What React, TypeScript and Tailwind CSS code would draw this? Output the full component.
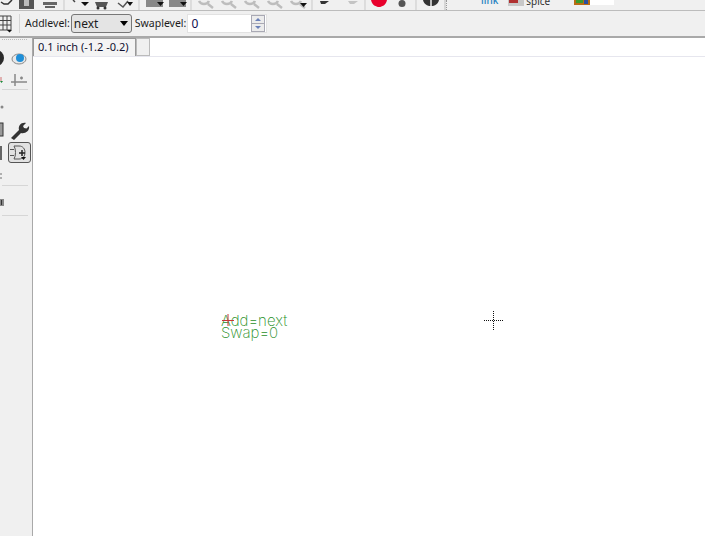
const ui = { fontFamily: '"Noto Sans", sans-serif' };

function TopIcons() {
  return (
    <svg width="446" height="10" viewBox="0 0 446 10" className="shrink-0">
      {/* open / save / print, only their bottoms are in view */}
      <path d="M1 2 4 4H8L12 0" fill="none" stroke="#333" strokeWidth="1.5" />
      <path d="M19 0H34V9H19Z" fill="#555" />
      <rect x="24" y="0" width="5" height="6" fill="#bbb" />
      <path d="M43 2H57V5H43Z" fill="#666" />
      <path d="M45 7H55" stroke="#333" strokeWidth="1.5" />
      <path d="M64 0V10" stroke="#c9c9c9" />
      {/* arrows */}
      <path d="M73 0 75 2" stroke="#444" strokeWidth="1.5" />
      <path d="M81 2H89L85 6Z" fill="#111" />
      <path d="M95 2H108L106 7H97Z" fill="#555" />
      <circle cx="98" cy="8" r="1.5" fill="#333" />
      <circle cx="105" cy="8" r="1.5" fill="#333" />
      <path d="M118 3 123 7 128 1" fill="none" stroke="#555" strokeWidth="1.5" />
      <path d="M127 2H133L130 6Z" fill="#111" />
      <path d="M139 0V10" stroke="#c9c9c9" />
      {/* two grey buttons */}
      <rect x="146" y="0" width="17" height="7" fill="#888" />
      <path d="M157 2H164L160.500 6Z" fill="#111" />
      <rect x="169" y="0" width="17" height="7" fill="#888" />
      <path d="M180 2H187L183.500 6Z" fill="#111" />
      <path d="M191 0V10" stroke="#c9c9c9" />
      {/* zoom glasses, greyed out */}
      <g fill="none" stroke="#bdbdbd" strokeWidth="2.500">
        <path d="M199 1C201 5 207 5 209 1M208 4 213 8" />
        <path d="M222 1C224 5 230 5 232 1M231 4 236 8" />
        <path d="M245 1C247 5 253 5 255 1M254 4 259 8" />
        <path d="M268 1C270 5 276 5 278 1M277 4 282 8" />
        <path d="M291 1C293 5 299 5 301 1M300 4 305 8" />
      </g>
      <path d="M300 3H307L303.500 7Z" fill="#111" />
      <path d="M312 0V10" stroke="#c9c9c9" />
      <path d="M320 1H329L325 4 321 4Z" fill="#333" />
      <path d="M348 1H358L354 4H350Z" fill="#c4c4c4" />
      <path d="M365 0V10" stroke="#c9c9c9" />
      <path d="M371 0H387C386 5 382 7 379 7S372 5 371 0Z" fill="#e8002c" />
      <circle cx="402" cy="3.500" r="3.500" fill="#555" />
      <path d="M416 0V10" stroke="#c9c9c9" />
      <path d="M423 0H439C438 4 435 6 431 6S424 4 423 0Z" fill="#333" />
      <path d="M431 0V6" stroke="#eee" strokeWidth="1.500" />
      {/* toolbar grip */}
      <path d="M445 0V10" stroke="#bcbcbc" />
    </svg>
  );
}

function StatusStrip() {
  return (
    <div className="flex h-[10px] flex-1 overflow-hidden text-[10px] leading-[10px]" style={ui}>
      <div className="w-[3px] shrink-0 border-l border-dotted border-[#999]" />
      <span className="ml-[32px] -translate-y-[5px] font-medium text-[#1f7fc0]">link</span>
      <svg width="16" height="6" viewBox="0 0 16 6" className="ml-[10px] shrink-0">
        <rect width="16" height="6" fill="#c8c8c8" />
        <rect x="1" width="9" height="3" fill="#b03030" />
      </svg>
      <span className="ml-[2px] -translate-y-[4px] text-[#333]">spice</span>
      <svg width="40" height="5" viewBox="0 0 40 5" className="ml-[24px] shrink-0">
        <rect width="40" height="5" fill="#fff" />
        <rect width="16" height="5" fill="#b86c14" />
        <rect x="2" width="7" height="3" fill="#3c9a2c" />
        <rect x="10" width="4" height="4" fill="#2a4fa0" />
      </svg>
    </div>
  );
}

function GridButton() {
  return (
    <svg width="12" height="18" viewBox="0 0 12 18" className="shrink-0">
      <path d="M0 1H11V15H0M0 5.500H11M0 10H11M3 1V15M7 1V15" fill="none" stroke="#444" />
      <path d="M7 15H12L9.500 17.500Z" fill="#111" />
    </svg>
  );
}

function Spinner() {
  return (
    <div className="flex h-[17px] w-[14px] flex-col border border-[#a9a9b4] bg-[#ececec]">
      <div className="flex flex-1 items-center justify-center border-b border-[#a9a9b4]">
        <div className="h-0 w-0 border-x-[3.500px] border-b-[3px] border-x-transparent border-b-[#6a80b8]" />
      </div>
      <div className="flex flex-1 items-center justify-center">
        <div className="h-0 w-0 border-x-[3.500px] border-t-[3px] border-x-transparent border-t-[#6a80b8]" />
      </div>
    </div>
  );
}

function Toolbar() {
  return (
    <div className="flex h-[27px] items-center border-b-2 border-[#a9a9a9] text-[10.5px] text-[#1c1c1c]" style={ui}>
      <GridButton />
      <div className="ml-[7px] h-[19px] w-px bg-[#d4d4d4]" />
      <span className="ml-[5px]">Addlevel:</span>
      <div className="ml-px flex h-[19px] w-[61px] items-center justify-between rounded-[3px] border border-[#777] bg-[#e4e4e4] pl-[2px] pr-[3px]">
        <span className="text-[12px]">next</span>
        <div className="h-0 w-0 border-x-[4.500px] border-t-[5px] border-x-transparent border-t-black" />
      </div>
      <span className="ml-[3px]">Swaplevel:</span>
      <div className="ml-[1px] flex h-[19px] w-[80px] items-center justify-between border border-[#e2e2e2] bg-white pl-[3px] pr-px">
        <span className="text-[12px] text-[#101050]">0</span>
        <Spinner />
      </div>
    </div>
  );
}

function SideIcons() {
  return (
    <div className="flex h-full w-[33px] shrink-0 flex-col border-r border-[#a9a9a9] pt-[1px]">
      <div className="ml-[2px] h-[5px] w-[25px] border-t border-dotted border-[#bbb]" />
      <svg width="32" height="36" viewBox="0 0 32 36" className="mt-[7px]">
        <circle cx="-4" cy="7" r="8" fill="#2b2b2b" />
        <ellipse cx="19" cy="8" rx="7" ry="5" fill="#e8e8e8" stroke="#888" />
        <circle cx="20" cy="7" r="4" fill="#1f8fd8" />
        <rect x="0" y="26" width="2" height="4" fill="#e0b0b0" />
        <path d="M0 30H3L1.500 32Z" fill="#1a8a3a" />
        <path d="M15 23V35M11 31H27M20 27H23M21.500 25.500V28.500" fill="none" stroke="#888" strokeWidth="1.500" />
      </svg>
      <div className="ml-[2px] mt-[2px] h-px w-[26px] bg-[#d6d6d6]" />
      <svg width="32" height="14" viewBox="0 0 32 14" className="mt-[10px]">
        <circle cx="2" cy="7" r="1.500" fill="#888" />
      </svg>
      <svg width="32" height="20" viewBox="0 0 32 20" className="mt-[6px]">
        <rect x="-6" y="3" width="9" height="13" fill="#999" stroke="#333" />
        <path d="M11 18 19 10C18 6 21 2 26 3L23 6 24 8 26.500 8.500 29 6C30 11 25 14 21 13L14 20Z" fill="#333" />
      </svg>
      <div className="mt-[2px] flex items-center">
        <div className="h-[14px] w-[2px] bg-[#666]" />
        <div className="ml-[6px] flex h-[21px] w-[23px] items-center justify-center rounded-[3px] border border-[#555] bg-[#e2e2e2]">
          <svg width="19" height="17" viewBox="0 0 19 17">
            <path d="M4 2H9C13 2 15 5 15 8.500S13 15 9 15H4M4 2C6 5 6 12 4 15M0 5.500H4M0 11.500H4" fill="none" stroke="#555" />
            <path d="M9 9H15M12 6V12" stroke="#222" strokeWidth="1.500" />
            <path d="M11 13H16L13.500 16Z" fill="#111" />
          </svg>
        </div>
      </div>
      <svg width="32" height="14" viewBox="0 0 32 14" className="mt-[7px]">
        <path d="M0 4H2M0 8H2" stroke="#999" strokeWidth="1.500" />
      </svg>
      <div className="ml-[2px] mt-[1px] h-px w-[26px] bg-[#d6d6d6]" />
      <svg width="32" height="8" viewBox="0 0 32 8" className="mt-[13px]">
        <rect x="0" y="0" width="4" height="7" fill="#888" />
        <rect x="1" y="1" width="1" height="5" fill="#333" />
      </svg>
      <div className="ml-[2px] mt-[8px] h-px w-[26px] bg-[#d6d6d6]" />
    </div>
  );
}

function TabBar() {
  return (
    <div className="flex h-[19px] items-stretch border-b border-[#e6e6ee] text-[11px] text-[#101030]" style={ui}>
      <div className="flex w-[103px] items-center border-x border-t border-[#999] bg-[#f4f4f4] pl-[4px] whitespace-nowrap">
        0.1 inch (-1.2 -0.2)
      </div>
      <div className="w-[14px] border border-[#bbb] bg-[#f0f0f0]" />
      <div className="flex-1 bg-white" />
    </div>
  );
}

function Canvas() {
  return (
    <div className="relative flex-1 bg-white">
      {/* symbol with its attributes, placed on the schematic */}
      <div
        className="absolute left-[188px] top-[258px] text-[15px] leading-[12px] font-extralight whitespace-nowrap text-[#1f8f1f]"
        style={{ fontFamily: 'Inter, sans-serif' }}
      >
        <div>Add=next</div>
        <div>Swap=0</div>
      </div>
      <svg width="14" height="16" viewBox="0 0 14 16" className="absolute left-[189px] top-[256px]">
        <path d="M0 7.500H12M6 1V13" stroke="#c83838" />
      </svg>
      {/* crosshair cursor */}
      <svg width="20" height="20" viewBox="0 0 20 20" className="absolute left-[451px] top-[254px]">
        <path d="M0 9.500H20M9.500 0V20" stroke="#111" strokeDasharray="1 1" />
      </svg>
    </div>
  );
}

export default function App() {
  return (
    <div className="flex h-[536px] w-[705px] flex-col overflow-hidden bg-[#f0f0f0]">
      <div className="flex h-[11px] border-b border-[#bcbcbc]">
        <TopIcons />
        <StatusStrip />
      </div>
      <Toolbar />
      <div className="flex min-h-0 flex-1">
        <SideIcons />
        <div className="flex min-w-0 flex-1 flex-col">
          <TabBar />
          <Canvas />
        </div>
      </div>
    </div>
  );
}
